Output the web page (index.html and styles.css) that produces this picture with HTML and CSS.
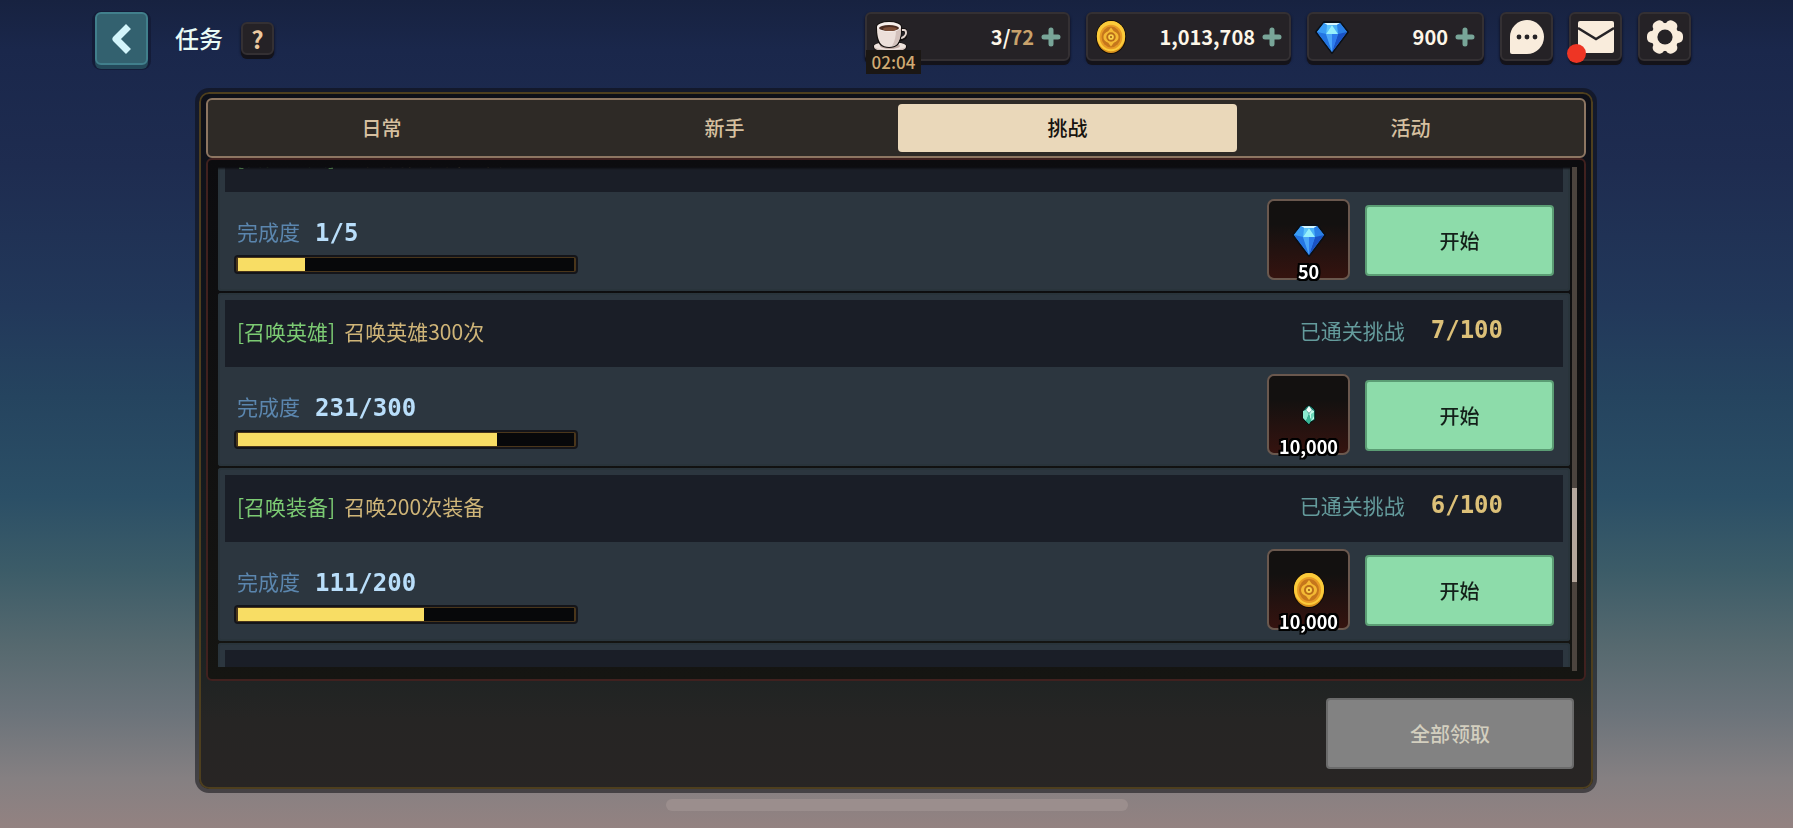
FILE: index.html
```html
<!DOCTYPE html>
<html lang="zh-CN">

<head>
    <meta charset="UTF-8">
    <meta name="viewport" content="width=device-width, initial-scale=1.0">
    <title>任务</title>
    <link rel="stylesheet" href="styles.css">
</head>

<body>
    <!-- Shared icons -->
    <svg class="sprite" aria-hidden="true">
        <symbol id="icon-gem" viewBox="0 0 34 34">
            <path d="M9 2h16l8 10-16 21L1 12z" fill="#0a1018" stroke="#0a1018" stroke-width="2" stroke-linejoin="round" />
            <path d="M9 3h16l7 9-15 20L2 12z" fill="#2f8cf0" />
            <path d="M9 3h16l-3 2H12z" fill="#d4f6ff" />
            <path d="M9 3l3 2-1 9-9-2z" fill="#3a9df5" />
            <path d="M25 3l-3 2 1 9 9-2z" fill="#2a7fe6" />
            <path d="M12 5l5 0-6 9z" fill="#5cc4fb" />
            <path d="M22 5h-5l6 9z" fill="#4bb2f8" />
            <path d="M17 5l6 9H11z" fill="#96f0fb" />
            <path d="M2 12l9 2 6 18z" fill="#2475e2" />
            <path d="M32 12l-9 2-6 18z" fill="#1a52c4" />
            <path d="M11 14h6v18z" fill="#4ba6f8" />
            <path d="M23 14h-6v18z" fill="#2e7cec" />
        </symbol>
        <symbol id="icon-coin" viewBox="0 0 34 36">
            <ellipse cx="17" cy="18" rx="16" ry="18" fill="#120d08" />
            <ellipse cx="17" cy="18" rx="15" ry="17" fill="#d9911d" />
            <ellipse cx="17" cy="17" rx="15" ry="16" fill="#fbcb3a" />
            <ellipse cx="17" cy="18" rx="12" ry="13" fill="#e79a25" />
            <ellipse cx="17" cy="18" rx="10" ry="11" fill="#c5761c" />
            <path d="M17 8l3 4c3 1 5 3 5 6s-2 5-5 6l-3 4-3-4c-3-1-5-3-5-6s2-5 5-6z" fill="#f4b933" />
            <circle cx="17" cy="18" r="5" fill="#b96d1a" />
            <circle cx="17" cy="18" r="3" fill="#fbd04a" />
            <circle cx="17" cy="18" r="1" fill="#8d4f12" />
        </symbol>
        <symbol id="icon-crystal" viewBox="0 0 14 20">
            <path d="M7 0l3 2 3 3v10l-4 2-2 3-3-3-3-3V6l3-4z" fill="#1d7f70" stroke="#07130f" />
            <path d="M7 1l3 4-3 3-3-3z" fill="#f2fffb" />
            <path d="M1 6l3-1 3 4-3 7-3-3z" fill="#8cebd0" />
            <path d="M10 5l2 1v8l-3 2-2-7z" fill="#c5fbea" />
            <path d="M7 9l2 7-2 3-3-3z" fill="#39b595" />
            <path d="M9 9l3-2v4l-3 5z" fill="#6ad8b8" />
        </symbol>
        <symbol id="icon-cup" viewBox="0 0 34 34">
            <ellipse cx="17" cy="27" rx="17" ry="6" fill="#14100f" />
            <ellipse cx="17" cy="27" rx="16" ry="5" fill="#d3c2bc" />
            <ellipse cx="17" cy="26" rx="16" ry="4" fill="#efe3de" />
            <ellipse cx="17" cy="26" rx="10" ry="3" fill="#c1aaa4" />
            <path d="M28 10h3c2 0 2 2 2 4 0 3-3 5-6 5" fill="none" stroke="#14100f" stroke-width="4" />
            <path d="M28 10h3c1 0 2 1 2 3 0 3-3 5-6 5" fill="none" stroke="#e2d4cf" stroke-width="2" />
            <path d="M3 7c0-8 26-8 26 0 0 9-1 14-4 18-4 4-14 4-18 0C4 21 3 16 3 7z" fill="#14100f" />
            <path d="M4 7h24c0 8-1 13-4 17-3 4-13 4-16 0C5 20 4 15 4 7z" fill="#ecdfda" />
            <path d="M23 9l5-2c0 8-1 13-4 17-1 1-3 2-5 2 3-5 4-10 4-17z" fill="#d3c1bc" />
            <ellipse cx="16" cy="7" rx="12" ry="5" fill="#f6eeeb" />
            <ellipse cx="16" cy="8" rx="10" ry="3" fill="#4a2b20" />
            <ellipse cx="17" cy="9" rx="7" ry="2" fill="#7a4d37" />
        </symbol>
        <symbol id="icon-plus" viewBox="0 0 20 20">
            <path d="M10 3v14M3 10h14" fill="none" stroke="#78a598" stroke-width="5" stroke-linecap="round" />
        </symbol>
    </svg>

    <header class="topbar">
        <button class="back" type="button" aria-label="返回">
            <svg width="20" height="30" viewBox="0 0 20 30">
                <path d="M14 5L4 15l10 10" fill="none" stroke="#d3f5fb" stroke-width="7" stroke-linecap="square" stroke-linejoin="round" />
            </svg>
        </button>
        <h1 class="title">任务</h1>
        <button class="help" type="button">?</button>

        <div class="resources">
            <div class="chip">
                <svg class="chip-icon"><use href="#icon-cup" /></svg>
                <span class="chip-value">3/<span class="limit">72</span></span>
                <button class="add" type="button" aria-label="补充体力"><svg width="20" height="20"><use href="#icon-plus" /></svg></button>
                <span class="timer">02:04</span>
            </div>
            <div class="chip">
                <svg class="chip-icon"><use href="#icon-coin" /></svg>
                <span class="chip-value">1,013,708</span>
                <button class="add" type="button" aria-label="补充金币"><svg width="20" height="20"><use href="#icon-plus" /></svg></button>
            </div>
            <div class="chip chip-small">
                <svg class="chip-icon"><use href="#icon-gem" /></svg>
                <span class="chip-value">900</span>
                <button class="add" type="button" aria-label="补充钻石"><svg width="20" height="20"><use href="#icon-plus" /></svg></button>
            </div>
            <button class="tool" type="button" aria-label="聊天">
                <svg width="36" height="36" viewBox="0 0 36 36">
                    <path d="M18 1a17 17 0 0 1 0 34H3a2 2 0 0 1-2-2V18A17 17 0 0 1 18 1z" fill="#f9ecdc" />
                    <circle cx="10" cy="18" r="2.4" fill="#252226" />
                    <circle cx="18" cy="18" r="2.4" fill="#252226" />
                    <circle cx="26" cy="18" r="2.4" fill="#252226" />
                </svg>
            </button>
            <button class="tool" type="button" aria-label="邮件">
                <svg width="36" height="36" viewBox="0 0 36 36">
                    <rect x="0" y="2" width="36" height="32" rx="2" fill="#f9ecdc" />
                    <path d="M0 9l18 11L36 9" fill="none" stroke="#252226" stroke-width="2.4" />
                </svg>
                <span class="dot"></span>
            </button>
            <button class="tool" type="button" aria-label="设置">
                <svg width="38" height="38" viewBox="0 0 38 38">
                    <g fill="#f9ecdc">
                        <circle cx="19" cy="19" r="14" />
                        <rect x="1" y="13" width="36" height="12" rx="5" />
                        <rect x="1" y="13" width="36" height="12" rx="5" transform="rotate(60 19 19)" />
                        <rect x="1" y="13" width="36" height="12" rx="5" transform="rotate(120 19 19)" />
                    </g>
                    <circle cx="19" cy="19" r="7.6" fill="#252226" />
                </svg>
            </button>
        </div>
    </header>

    <main class="panel">
        <nav class="tabs">
            <button class="tab" type="button">日常</button>
            <button class="tab" type="button">新手</button>
            <button class="tab active" type="button">挑战</button>
            <button class="tab" type="button">活动</button>
        </nav>

        <div class="board">
            <div class="quests" id="quests">
                <section class="quest">
                    <div class="quest-head">
                        <span class="tag">[冒险通关]</span>
                        <span class="name">通关冒险关卡5次</span>
                    </div>
                    <div class="quest-body">
                        <div class="progress">
                            <div class="progress-text"><span class="label">完成度</span><span class="count">1/5</span></div>
                            <div class="bar"><div class="fill" style="width: 20%"></div></div>
                        </div>
                        <div class="reward">
                            <svg class="gem"><use href="#icon-gem" /></svg>
                            <span class="amount">50</span>
                        </div>
                        <button class="start" type="button">开始</button>
                    </div>
                </section>

                <section class="quest">
                    <div class="quest-head">
                        <span class="tag">[召唤英雄]</span>
                        <span class="name">召唤英雄300次</span>
                        <div class="cleared">已通关挑战<span class="cleared-count">7/100</span></div>
                    </div>
                    <div class="quest-body">
                        <div class="progress">
                            <div class="progress-text"><span class="label">完成度</span><span class="count">231/300</span></div>
                            <div class="bar"><div class="fill" style="width: 77%"></div></div>
                        </div>
                        <div class="reward">
                            <svg class="crystal"><use href="#icon-crystal" /></svg>
                            <span class="amount">10,000</span>
                        </div>
                        <button class="start" type="button">开始</button>
                    </div>
                </section>

                <section class="quest">
                    <div class="quest-head">
                        <span class="tag">[召唤装备]</span>
                        <span class="name">召唤200次装备</span>
                        <div class="cleared">已通关挑战<span class="cleared-count">6/100</span></div>
                    </div>
                    <div class="quest-body">
                        <div class="progress">
                            <div class="progress-text"><span class="label">完成度</span><span class="count">111/200</span></div>
                            <div class="bar"><div class="fill" style="width: 55.5%"></div></div>
                        </div>
                        <div class="reward">
                            <svg class="coin"><use href="#icon-coin" /></svg>
                            <span class="amount">10,000</span>
                        </div>
                        <button class="start" type="button">开始</button>
                    </div>
                </section>

                <section class="quest">
                    <div class="quest-head"></div>
                    <div class="quest-body"></div>
                </section>
            </div>
            <div class="track">
                <div class="thumb"></div>
            </div>
        </div>

        <div class="actions">
            <button class="claim" type="button" disabled>全部领取</button>
        </div>
    </main>

    <div class="home-bar"></div>

    <script>
        // Open the list part way through the first quest
        document.getElementById('quests').scrollTop = 49;
    </script>
</body>

</html>
```
FILE: styles.css
```css
* {
    box-sizing: border-box;
}

body {
    display: flex;
    flex-direction: column;
    height: 100vh;
    margin: 0;
    overflow: hidden;
    font-family: "Noto Sans CJK SC", sans-serif;
    font-size: 20px;
    line-height: 28px;
    background: linear-gradient(#172240 0%, #1a274b 6%, #1e2c50 20%, #22385a 37%, #25445f 48%, #2b4f66 60%, #3c5c68 69%, #56696f 78%, #6b737a 86%, #858082 94%, #938281 100%);
}

button {
    padding: 0;
    border: 0;
    font: inherit;
    cursor: pointer;
}

svg {
    display: block;
}

.sprite {
    position: absolute;
    width: 0;
    height: 0;
}

/* Top bar */
.topbar {
    display: flex;
    align-items: flex-start;
    height: 88px;
    padding: 12px 102px 0 95px;
}

.back {
    display: flex;
    align-items: center;
    justify-content: center;
    width: 53px;
    height: 53px;
    border: 2px solid #417f8c;
    border-radius: 6px;
    background: #33616f;
    box-shadow: 0 4px 0 #24495a, 0 2px 0 3px #141c38;
}

.title {
    margin: 12px 18px 0 27px;
    color: #e9fbf6;
    font-size: 24px;
    font-weight: 500;
    line-height: 28px;
}

.help {
    width: 33px;
    height: 33px;
    margin-top: 10px;
    border: 2px solid #343033;
    border-radius: 6px;
    background: #252226;
    box-shadow: 0 4px 0 #14131a, 0 2px 2px 1px #121830;
    color: #ecc9a0;
    font-size: 24px;
    font-weight: bold;
    line-height: 28px;
}

.resources {
    display: flex;
    gap: 16px;
    margin-left: auto;
}

.chip,
.tool {
    position: relative;
    display: flex;
    align-items: center;
    height: 49px;
    border: 2px solid #343033;
    border-radius: 6px;
    background: #252226;
    box-shadow: 0 4px 0 #14131a, 0 2px 2px 1px #121830;
}

.chip {
    width: 205px;
    padding: 0 7px 0 6px;
}

.chip-small {
    width: 177px;
}

.tool {
    justify-content: center;
    width: 53px;
}

.chip-icon {
    width: 34px;
    height: 34px;
}

.chip-value {
    margin-left: auto;
    color: #fdf6e8;
    font-weight: bold;
}

.limit {
    color: #c9a26b;
}

.add {
    margin-left: 7px;
    background: none;
}

.timer {
    position: absolute;
    left: -1px;
    top: 36px;
    width: 55px;
    background: #1b1714;
    color: #d0aa72;
    font-size: 17px;
    font-weight: 500;
    line-height: 24px;
    text-align: center;
}

.dot {
    position: absolute;
    left: -4px;
    bottom: -4px;
    width: 19px;
    height: 19px;
    border-radius: 50%;
    background: #ee3524;
}

/* Panel */
.panel {
    display: flex;
    flex: 1;
    flex-direction: column;
    min-height: 0;
    margin: 0 196px 0 195px;
    padding: 3px;
    border: 4px solid rgba(12, 12, 18, 0.55);
    border-radius: 14px;
    background: linear-gradient(#0e1018 0%, #10151c 40%, #1b2222 80%, #262524 90%, #282524 100%) padding-box;
    box-shadow: inset 0 0 0 2px #4e3f1e;
}

.tabs {
    display: flex;
    gap: 4px;
    height: 60px;
    margin: 3px 4px 0;
    padding: 4px;
    border: 2px solid #8d7662;
    border-radius: 6px;
    background: #2e2a26;
}

.tab {
    flex: 1;
    border-radius: 4px;
    background: none;
    color: #d6c0a0;
    font-weight: 500;
}

.tab.active {
    background: #ead8ba;
    color: #17130f;
}

.board {
    display: flex;
    flex: 1;
    gap: 2px;
    min-height: 0;
    margin: 0 4px;
    padding: 7px 7px 8px 10px;
    border: 2px solid #40211f;
    border-radius: 6px;
    background: linear-gradient(#0c0c0f, #151512);
}

.quests {
    flex: 1;
    margin-bottom: 4px;
    overflow: hidden;
    /* Soft top edge where the list scrolls under the frame */
    mask-image: linear-gradient(transparent, #000 3px);
}

.quest {
    height: 173px;
    padding: 7px 7px 0;
    border-radius: 3px;
    background: #2c363f;
    box-shadow: inset 0 0 0 2px #29343b;
}

.quest + .quest {
    margin-top: 2px;
}

.quest-head {
    display: flex;
    align-items: center;
    height: 67px;
    padding: 0 60px 6px 12px;
    background: #1a1e27;
    font-size: 21px;
}

.tag {
    margin-right: 9px;
    color: #7ccb73;
}

.name {
    color: #cfb578;
}

.cleared {
    display: flex;
    align-items: center;
    margin-left: auto;
    padding-bottom: 2px;
    color: #649b9c;
}

.count,
.cleared-count {
    font-family: "DejaVu Sans Mono", monospace;
    font-size: 24px;
    font-weight: bold;
}

.cleared-count {
    margin-left: 26px;
    color: #dcc078;
}

.quest-body {
    display: flex;
    align-items: center;
    padding: 7px 9px 0;
}

.progress {
    width: 344px;
    margin-top: 14px;
}

.progress-text {
    display: flex;
    align-items: flex-start;
    margin: 0 0 8px 3px;
}

.label {
    margin-right: 15px;
    color: #5b86ae;
    font-size: 21px;
    line-height: 24px;
}

.count {
    color: #b9defa;
}

.bar {
    display: flex;
    height: 19px;
    padding: 1px 2px;
    border: 2px solid #14151a;
    border-radius: 4px;
    background: linear-gradient(#07080a, #07080a) content-box, #4a361b;
}

.fill {
    background: #f8dd64;
}

.reward {
    position: relative;
    display: flex;
    align-items: center;
    justify-content: center;
    width: 83px;
    height: 81px;
    margin: 0 15px 0 auto;
    border: 2px solid #6a584e;
    border-radius: 7px;
    background: linear-gradient(#131110 30%, #35130f);
}

.gem {
    width: 34px;
    height: 34px;
}

.crystal {
    width: 14px;
    height: 20px;
}

.coin {
    width: 34px;
    height: 36px;
}

.amount {
    position: absolute;
    right: 0;
    bottom: -7px;
    left: 0;
    color: #fff;
    font-size: 18px;
    font-weight: bold;
    text-align: center;
    text-shadow: 2px 0 #000, -2px 0 #000, 0 2px #000, 0 -2px #000, 2px 2px #000, -2px 2px #000, 2px -2px #000, -2px -2px #000;
}

.start,
.claim {
    height: 71px;
    border: 2px solid #5b9d74;
    border-radius: 4px;
    background: #8ddcaa;
    color: #14201a;
    font-weight: 500;
}

.start {
    width: 189px;
    margin-top: 2px;
}

.claim {
    width: 248px;
    border-color: #6b6b6b;
    background: #828282;
    color: #d3cfbf;
}

.track {
    width: 5px;
    background: #4c443e;
}

.thumb {
    height: 94px;
    margin-top: 321px;
    background: #b5a79c;
}

.actions {
    display: flex;
    justify-content: flex-end;
    padding: 17px 16px;
}

.home-bar {
    width: 462px;
    height: 12px;
    margin: 6px auto 17px;
    border-radius: 6px;
    background: #9b8e8d;
}
```
